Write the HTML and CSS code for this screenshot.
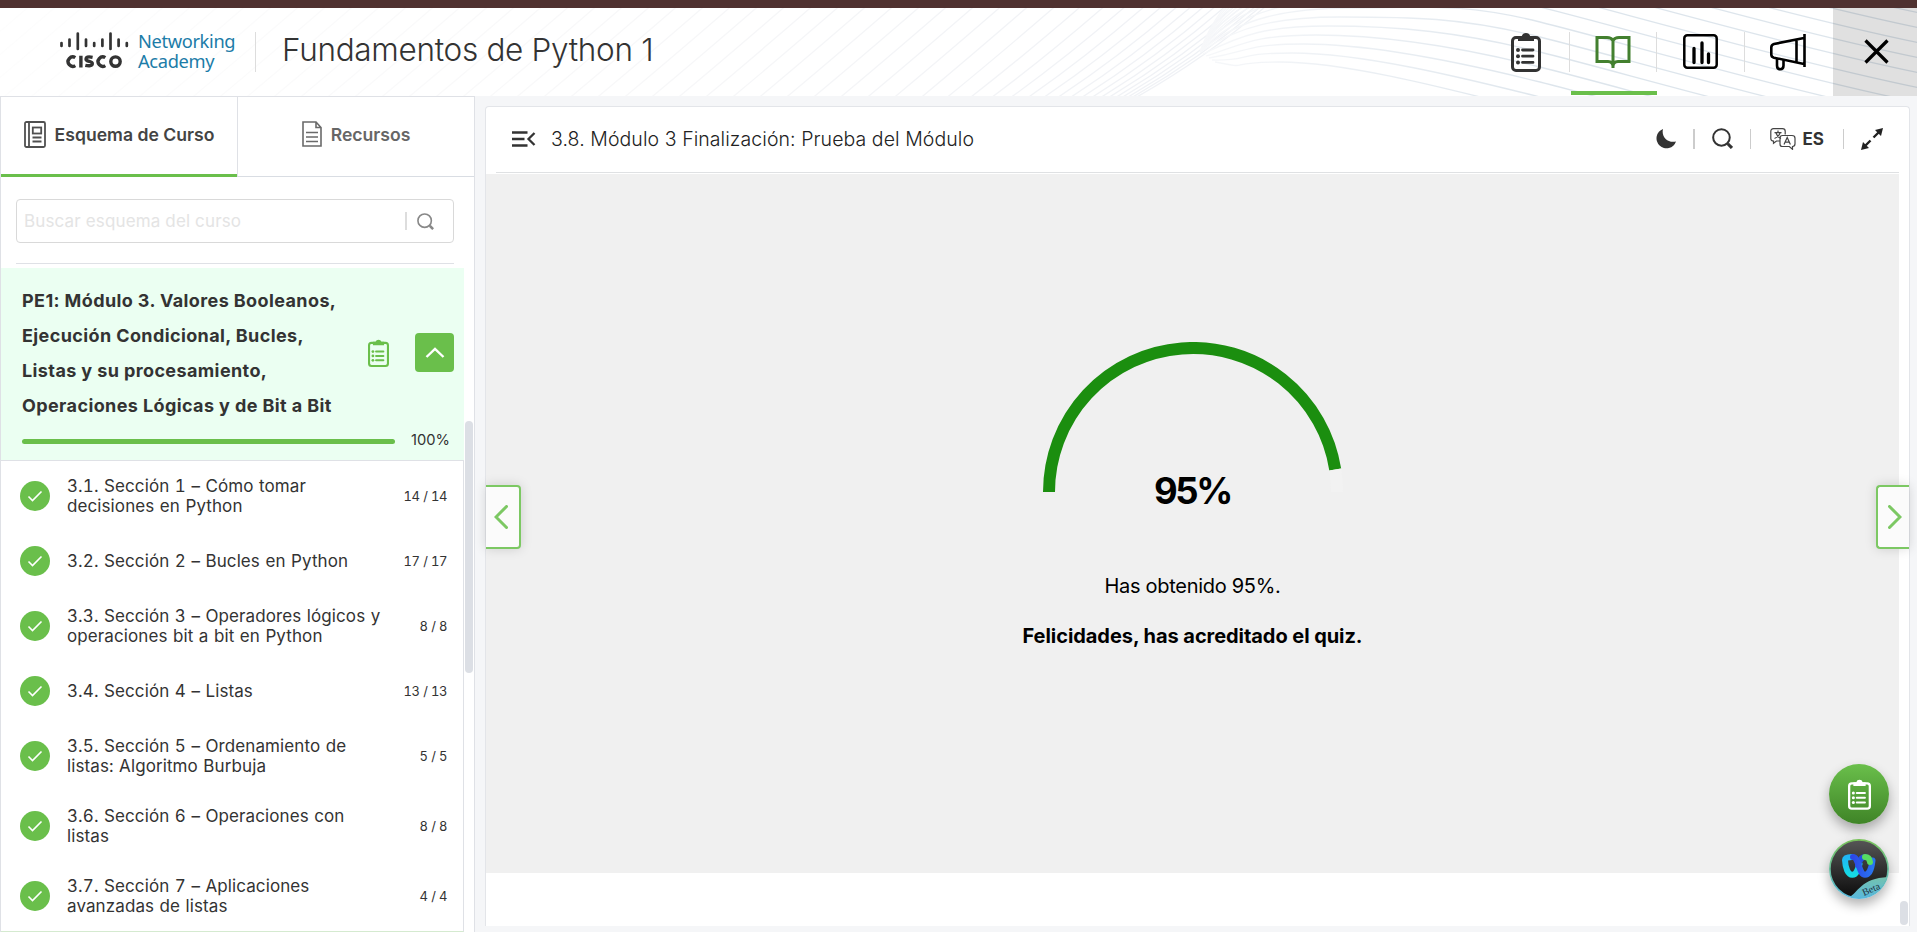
FILE: index.html
```html
<!DOCTYPE html>
<html lang="es">
<head>
<meta charset="utf-8">
<title>Fundamentos de Python 1</title>
<link rel="stylesheet" href="styles.css">
</head>
<body>
<svg class="defs" width="0" height="0">
  <symbol id="clip" viewBox="0 0 30 40"><rect x="1.500" y="5.500" width="27" height="33" rx="3.500" fill="none" stroke="currentColor" stroke-width="3"/><path d="M7 4h3.800a4.400 4.400 0 0 1 8.400 0h3.800v5h-16z" fill="currentColor"/><path d="M11.500 18h10.500M11.500 24.200h10.500M11.500 30.400h10.500" stroke="currentColor" stroke-width="2.800" stroke-linecap="round"/><g fill="currentColor"><circle cx="7" cy="18" r="2"/><circle cx="7" cy="24.200" r="2"/><circle cx="7" cy="30.400" r="2"/></g></symbol>
  <symbol id="lens" viewBox="0 0 20 20"><circle cx="9" cy="9" r="7.900" fill="none" stroke="currentColor" stroke-width="1.900"/><path d="M15 15l4 4" stroke="currentColor" stroke-width="3"/></symbol>
  <symbol id="check" viewBox="0 0 30 30"><circle cx="15" cy="15" r="15" fill="#6abf4b"/><path d="M8.500 15.500l4 4L21.500 10.500" fill="none" stroke="#fff" stroke-width="1.600"/></symbol>
</svg>
<div class="strip"></div>
<header class="header">
  <svg class="waves" width="1917" height="88" viewBox="0 8 1917 88"></svg>
  <svg class="bars" width="70" height="38" viewBox="59 31 70 38">
    <g stroke="#333" stroke-width="2.700" stroke-linecap="round"><path d="M61.500 43v3M69.500 39.500v6.500M77.800 33.500v15.500M86 39.500v6.500M94.200 43v3M102.400 39.500v6.500M110.500 33.500v15.500M118.600 39.500v6.500M126.800 43v3"/></g>
    <g fill="none" stroke="#333" stroke-width="3.400"><path d="M75.300 57.600a4.700 4.700 0 1 0 0 8M80.900 55.700v11.800M92.600 57.300c-5-1-6.600 0-6.600 1.700c0 3.300 6.300 1.500 6.300 4.700c0 2-3 2.500-7 1.600M105.300 57.600a4.700 4.700 0 1 0 0 8"/><circle cx="115.500" cy="61.600" r="4.700"/></g>
  </svg>
  <div class="academy"><div>Networking</div><div>Academy</div></div>
  <h1 class="title">Fundamentos de Python 1</h1>
  <nav class="nav">
    <a class="nav-item"><svg width="30" height="40"><use href="#clip"/></svg></a>
    <a class="nav-item active"><svg width="36" height="34" viewBox="0 0 36 34" fill="none" stroke="#43802f" stroke-width="3"><path d="M18 5.500C16.500 3 14.500 2.500 12 2.500H2v24h11c3 0 5 1.500 5 5c0-3.500 2-5 5-5h11v-24H24c-2.500 0-4.500.5-6 3zM18 5v28"/></svg></a>
    <a class="nav-item"><svg width="35" height="35" viewBox="0 0 35 35" fill="none" stroke="#000" stroke-width="2.500"><rect x="1.300" y="1.300" width="32.400" height="32.400" rx="3"/><path d="M11 14.500v14M19 9v19.500M25.500 20v8.500" stroke-width="3.300" stroke-linecap="round"/></svg></a>
    <a class="nav-item"><svg width="36" height="38" viewBox="0 0 36 38" fill="none" stroke="#000" stroke-width="2.600"><path d="M34.500 1v33M34 5L4 11c-2 .6-2.700 1.500-2.700 3.500v7c0 2 .7 2.700 2.700 3.200l30 6.300M26.500 7v22M7 26v6.500c0 5 6.500 5 6.500 0v-5"/></svg></a>
    <a class="close"><svg width="25" height="25" viewBox="0 0 25 25"><path d="M1.500 1.500l22 22M23.500 1.500l-22 22" stroke="#000" stroke-width="3.200"/></svg></a>
  </nav>
</header>
<main class="main">
  <aside class="sidebar">
    <div class="tabs">
      <div class="tab current"><svg width="22" height="27" viewBox="0 0 22 27" fill="none" stroke="#505050" stroke-width="1.800"><rect x="1" y="1" width="20" height="25" rx="1.500"/><path d="M5 1v25M8.500 16.500h9M8.500 20.500h9"/><rect x="8.800" y="6.500" width="8.400" height="6"/></svg><span>Esquema de Curso</span></div>
      <div class="tab"><svg width="20" height="26" viewBox="0 0 20 26" fill="none" stroke="#6a6a6a" stroke-width="1.600"><path d="M1 1h13l5 5.500v18.500H1zM14 1v5.500h5M4 11.500h12M4 16h12M4 20.500h12"/></svg><span>Recursos</span></div>
    </div>
    <div class="search"><span class="placeholder">Buscar esquema del curso</span><i></i><svg width="17" height="17"><use href="#lens"/></svg></div>
    <div class="rule"></div>
    <section class="module">
      <div class="module-top">
        <h2>PE1: Módulo 3. Valores Booleanos,<br>Ejecución Condicional, Bucles,<br>Listas y su procesamiento,<br>Operaciones Lógicas y de Bit a Bit</h2>
        <svg class="module-clip" width="21" height="28"><use href="#clip"/></svg>
        <button class="collapse"><svg width="20" height="12" viewBox="0 0 20 12"><path d="M1.500 10L10 2l8.500 8" fill="none" stroke="#fff" stroke-width="2.400"/></svg></button>
      </div>
      <div class="progress"><div class="bar"></div><span>100%</span></div>
    </section>
    <ul class="list">
      <li><svg><use href="#check"/></svg><p>3.1. Sección 1 – Cómo tomar<br>decisiones en Python</p><b>14 / 14</b></li>
      <li class="single"><svg><use href="#check"/></svg><p>3.2. Sección 2 – Bucles en Python</p><b>17 / 17</b></li>
      <li><svg><use href="#check"/></svg><p>3.3. Sección 3 – Operadores lógicos y<br>operaciones bit a bit en Python</p><b>8 / 8</b></li>
      <li class="single"><svg><use href="#check"/></svg><p>3.4. Sección 4 – Listas</p><b>13 / 13</b></li>
      <li><svg><use href="#check"/></svg><p>3.5. Sección 5 – Ordenamiento de<br>listas: Algoritmo Burbuja</p><b>5 / 5</b></li>
      <li><svg><use href="#check"/></svg><p>3.6. Sección 6 – Operaciones con<br>listas</p><b>8 / 8</b></li>
      <li><svg><use href="#check"/></svg><p>3.7. Sección 7 – Aplicaciones<br>avanzadas de listas</p><b>4 / 4</b></li>
    </ul>
    <div class="side-thumb"></div>
  </aside>
  <section class="card">
    <div class="toolbar">
      <svg width="24" height="16" viewBox="0 0 24 16" fill="none" stroke="#333" stroke-width="2.300"><path d="M0 1.500h15.500M0 8h12.500M0 14.500h15.500M22.500 2l-6 6 6 6"/></svg>
      <h3>3.8. Módulo 3 Finalización: Prueba del Módulo</h3>
      <div class="tools">
        <svg class="moon" width="20" height="20" viewBox="0 0 20 20"><path d="M7 0A10 10 0 1 0 20 12.500C12 14.500 5 8 7 0z" fill="#333"/></svg>
        <i class="thick"></i>
        <svg class="glass" width="21" height="21"><use href="#lens"/></svg>
        <i></i>
        <svg class="lang" width="26" height="22" viewBox="0 0 26 22" fill="none" stroke="#444" stroke-width="1.200"><path d="M10 13H6.500l-3 2.300V13C1.500 13 .8 12 .8 10.500v-7C.8 1.500 1.800.700 3.500.700h9c1.700 0 2.700 1 2.700 2.600v3.200M12.500 7.500h9.500c2 0 3 1 3 2.700v5.500c0 1.600-.8 2.700-2.500 2.800v2.800l-3.200-2.800h-6.800c-1.700 0-2.500-1-2.500-2.600v-5.700c0-1.700.8-2.700 2.500-2.700zM8 2.500v2M4.500 4.700h7M6 5c.7 2.200 2.500 4.500 5 5.500M10 5c-.7 2.300-2.700 4.500-5.500 5.500M14 16.500l3.200-7 3.200 7M15.200 14.200h4"/></svg>
        <strong>ES</strong>
        <i class="last"></i>
        <svg width="22" height="22" viewBox="0 0 22 22"><path d="M22 0l-2 8-6-6zM0 22l2-8 6 6z" fill="#222"/><path d="M19 3l-6.500 6.500M9.500 12.500L3 19" stroke="#222" stroke-width="2.400"/></svg>
      </div>
    </div>
    <div class="result">
      <svg class="gauge" width="300" height="159" viewBox="0 0 300 159"><path d="M6 150A144 144 0 0 1 292.230 127.470" fill="none" stroke="#1b8e0f" stroke-width="12"/><path d="M292.230 127.470A144 144 0 0 1 294 150" fill="none" stroke="#f2f2f2" stroke-width="12"/></svg>
      <div class="score">95%</div>
      <p>Has obtenido 95%.</p>
      <p class="congrats">Felicidades, has acreditado el quiz.</p>
    </div>
    <button class="arrow prev"><svg width="14" height="24" viewBox="0 0 14 24"><path d="M12.500 1.500L2 12l10.500 10.500" fill="none" stroke="#7cc863" stroke-width="3" stroke-linecap="round"/></svg></button>
    <button class="arrow next"><svg width="14" height="24" viewBox="0 0 14 24"><path d="M1.500 1.500L12 12 1.500 22.500" fill="none" stroke="#7cc863" stroke-width="3" stroke-linecap="round"/></svg></button>
    <div class="card-thumb"></div>
    <div class="fabs">
      <div class="fab task"><svg width="23" height="31"><use href="#clip"/></svg></div>
      <div class="fab"><svg width="60" height="60" viewBox="0 0 60 60">
        <defs>
          <linearGradient id="ring" x2="0" y2="1"><stop stop-color="#78c257"/><stop offset="1" stop-color="#58b8de"/></linearGradient>
          <linearGradient id="dark" x2="0" y2="1"><stop stop-color="#555"/><stop offset="1" stop-color="#0c0c0c"/></linearGradient>
          <linearGradient id="cy" x2="0" y2="1"><stop stop-color="#20b5f5"/><stop offset="1" stop-color="#15dbe4"/></linearGradient>
          <linearGradient id="bl" x2="1" y2="0"><stop stop-color="#2c48e8"/><stop offset="1" stop-color="#2974ef"/></linearGradient>
          <linearGradient id="tag" x2="0" y2="1"><stop stop-color="#74c2ae"/><stop offset="1" stop-color="#58b8de"/></linearGradient>
          <clipPath id="disc"><circle cx="30" cy="30" r="29"/></clipPath>
        </defs>
        <circle cx="30" cy="30" r="30" fill="url(#ring)"/><circle cx="30" cy="30" r="28.300" fill="url(#dark)"/>
        <g fill="none" stroke-width="6" stroke-linecap="round"><path d="M23 18c-4 0-7 .5-7 3c.3 8 3 15 7.500 14.800c4 0 5.500-6 7-10.800" stroke="url(#cy)"/><path d="M29 26c1.500-5 4-8 7-8" stroke="#2450e0"/><path d="M43.500 21.500c-.8 8-3.500 14.300-7.500 14.300c-6 0-6.500-17.800-12-17.800" stroke="url(#bl)"/><path d="M36 18c3 0 4.700 2 5 5" stroke="#57dd61"/></g>
        <path clip-path="url(#disc)" d="M17 60C29 56 30 39 60 38V60z" fill="url(#tag)"/>
        <text x="35" y="57" transform="rotate(-24 35 57)" class="beta">Beta</text>
      </svg></div>
    </div>
  </section>
</main>
<script src="waves.js"></script>
</body>
</html>
```
FILE: styles.css
```css
* { box-sizing: border-box; }
body { margin: 0; width: 1917px; height: 932px; overflow: hidden; background: #f5f6f8; color: #333; font-family: Inter, "Liberation Sans", sans-serif; }
h1, h2, h3, p, ul { margin: 0; padding: 0; }
svg { display: block; flex: none; }
button { padding: 0; display: flex; align-items: center; justify-content: center; }
.defs { position: absolute; }
.strip { height: 8px; background: #4f3130; }
.header { height: 88px; background: #fff; display: flex; position: relative; padding-left: 59px; }
.waves { position: absolute; left: 0; top: 0; }
.bars { margin-top: 23px; position: relative; }
.academy { position: relative; margin: 23px 0 0 9px; width: 117px; font: 18.300px/20px "Noto Sans", sans-serif; letter-spacing: -.36px; color: #1c7ca8; }
.title { position: relative; margin-top: 24px; height: 40px; padding-left: 26px; border-left: 1px solid #ddd; font-size: 31.500px; line-height: 35px; letter-spacing: -.3px; font-weight: 300; white-space: nowrap; }
.nav { position: relative; margin-left: auto; display: flex; }
.nav-item { width: 87.500px; padding-bottom: 1px; display: flex; align-items: center; justify-content: center; position: relative; }
.nav-item + .nav-item::before { content: ""; position: absolute; left: -1px; top: 24px; width: 1px; height: 40px; background: #ddd; }
.active::after { content: ""; position: absolute; left: 1px; right: 0; bottom: 1px; height: 4px; background: #6abf4b; }
.close { width: 84px; margin-left: 1px; padding: 0 0 2px 3px; display: flex; align-items: center; justify-content: center; background: rgba(0,0,0,.12); }
.main { display: flex; height: 836px; }
.sidebar { width: 475px; background: #fff; border: 1px solid #dfe1e6; border-bottom: 0; position: relative; }
.tabs { display: flex; height: 80px; border-bottom: 1px solid #d9dde3; }
.tab { width: 236px; display: flex; align-items: center; justify-content: center; gap: 9px; padding: 0 0 5px; font-size: 17.600px; font-weight: 600; color: #666; }
.tab.current { width: 237px; color: #444; border-right: 1px solid #dfe1e6; position: relative; }
.current::after { content: ""; position: absolute; left: 0; right: 0; bottom: -1px; height: 3px; background: #6abf4b; }
.search { margin: 22px 0 0 15px; width: 438px; height: 44px; border: 1px solid #d9d9d9; border-radius: 4px; display: flex; align-items: center; padding: 0 19px 0 7px; color: #888; }
.placeholder { font-size: 17px; letter-spacing: .14px; color: #e4e4e4; font-weight: 400; flex: 1; }
.search i { width: 2px; height: 18px; background: #ddd; margin-right: 10px; }
.rule { margin: 20px 0 4px 15px; width: 438px; height: 1px; background: #dfe1e6; }
.module { width: 463px; height: 193px; background: #ebfff2; border-bottom: 1px solid #dfe1e6; padding: 15px 10px 0 21px; }
.module-top { display: flex; align-items: center; height: 140px; }
.module h2 { font-size: 18px; letter-spacing: .39px; line-height: 35px; font-weight: 700; white-space: nowrap; width: 346px; }
.module-clip { color: #6abf4b; }
.collapse { width: 39px; height: 39px; margin: -1px 0 0 auto; border: 0; border-radius: 4px; background: #6abf4b; }
.progress { display: flex; align-items: center; gap: 16px; height: 33px; font-size: 14.700px; }
.bar { width: 373px; height: 5px; border-radius: 3px; background: #6abf4b; margin-top: 4px; }
.list { list-style: none; width: 463px; border-right: 1px solid #dfe1e6; height: 471px; border-bottom: 1px solid #d5ead0; font-variant-numeric: tabular-nums; }
.list li { height: 70px; display: flex; align-items: center; padding: 0 16px 0 19px; }
.list .single { height: 60px; }
.list svg { width: 30px; height: 30px; }
.list p { margin-left: 17px; flex: 1; font-size: 17px; letter-spacing: .1px; word-spacing: .8px; line-height: 20px; white-space: nowrap; }
.list b { font-weight: 400; font-size: 13px; letter-spacing: -.45px; word-spacing: .6px; }
.side-thumb { position: absolute; left: 464px; top: 324px; width: 8px; height: 252px; border-radius: 4px; background: #dcdfe5; }
.card { margin: 10px 0 6px 10px; width: 1425px; background: #fff; border: 1px solid #e3e5e9; border-bottom: 0; border-radius: 4px 4px 0 0; position: relative; }
.toolbar { height: 66px; margin: 0 10px; border-bottom: 1px solid #dfe1e3; display: flex; align-items: center; padding: 0 16px 2px; }
.toolbar h3 { margin-left: 15px; font-size: 19.500px; letter-spacing: .07px; font-weight: 300; color: #222; white-space: nowrap; }
.tools { margin-left: auto; display: flex; align-items: center; }
.tools i { width: 1px; height: 20px; background: #ccc; margin: 0 19px 0 17px; }
.tools .thick { width: 2px; margin: 0 17px; }
.tools .last { margin: 0 17px 0 19px; }
.tools strong { font-size: 17px; margin-left: 7px; }
.result { width: 1413px; height: 699px; margin-top: 1px; background: #f0f0f0; display: flex; flex-direction: column; align-items: center; color: #000; padding-top: 168px; font-size: 20px; line-height: 24px; }
.score { font-size: 36.500px; line-height: 40px; font-weight: 700; letter-spacing: -2.400px; margin-top: -30px; }
.result p { margin-top: 63px; letter-spacing: -.3px; }
.result .congrats { margin-top: 26px; font-weight: 700; letter-spacing: -.06px; }
.arrow { position: absolute; top: 378px; height: 64px; background: #fbfbfb; border: 2px solid #7cc863; box-shadow: 0 0 12px rgba(0,0,0,.15); }
.prev { left: 0; width: 35px; border-left: 0; border-radius: 0 4px 4px 0; padding-right: 3px; }
.next { right: 0; width: 33px; border-right: 0; border-radius: 4px 0 0 4px; }
.next svg { margin-left: 2px; }
.card-thumb { position: absolute; right: 1px; bottom: 1px; width: 8px; height: 24px; border-radius: 4px; background: #dcdfe5; }
.fabs { position: absolute; left: 1343px; top: 657px; display: grid; gap: 15px; }
.fab { width: 60px; height: 60px; border-radius: 50%; display: grid; place-items: center; box-shadow: 0 6px 12px rgba(0,0,0,.3); }
.task { color: #fff; background: linear-gradient(#6abf4b, #3f8427); }
.beta { font: 10px "Liberation Serif", serif; fill: #234; }
```
FILE: waves.js
```js
// Draws the faint contour lines behind the header.
const waves = document.querySelector('.waves');
let out = '';
// Rising lines on the left, closer together towards the fold.
let x = 1135;
let gap = 4;
while (x > -100) {
  out += `<path d="M${x} 98Q${x + 75 - gap} 58 ${x + 135 - gap} 6" stroke="url(#rise)"/>`;
  x -= gap;
  gap = Math.min(27, gap * 1.09 + 0.3);
}
// Lines that crest past the fold and fall to the right edge.
for (let j = -10; j < 6; j++) {
  const px = 1340 - 12 * j;
  const py = 17 + 9 * j;
  const y = 37 + 15 * j;
  const sx = 1200 + Math.max(0, j) * 3;
  const sy = 52 + Math.max(0, j) * 2;
  out += `<path d="M${sx} ${sy}C${sx + 40} ${py + 8} ${px - 60} ${py} ${px} ${py}C${px + 70} ${py} 1460 ${y - 20} 1540 ${y}S1800 ${y + 72} 1930 ${y + 98}" stroke="url(#fall)"/>`;
}
waves.innerHTML = `<defs>
<linearGradient id="rise" gradientUnits="userSpaceOnUse" x1="0" x2="1200" y1="0" y2="0"><stop stop-color="#fdfdfd"/><stop offset=".5" stop-color="#f8f8f9"/><stop offset="1" stop-color="#eff1f5"/></linearGradient>
<linearGradient id="fall" gradientUnits="userSpaceOnUse" x1="1200" x2="1560" y1="0" y2="0"><stop stop-color="#f7f8fa"/><stop offset="1" stop-color="#dde5ec"/></linearGradient>
</defs><g fill="none" stroke-width="1.3">${out}</g>`;
```
